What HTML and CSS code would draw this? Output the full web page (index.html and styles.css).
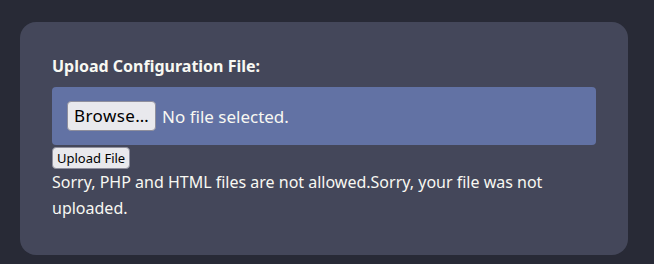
FILE: index.html
```html
<!DOCTYPE html>
<html lang="en">
<head>
<meta charset="utf-8">
<title>Upload</title>
<link rel="stylesheet" href="styles.css">
</head>
<body>
<main class="card">
  <form class="upload-form">
    <label class="label">Upload Configuration File:</label>
    <div class="file-box">
      <span class="browse">Browse…</span>
      <span class="file-status">No file selected.</span>
    </div>
    <button type="button" class="submit">Upload File</button>
  </form>
  <p class="message">Sorry, PHP and HTML files are not allowed.Sorry, your file was not uploaded.</p>
</main>
</body>
</html>
```
FILE: styles.css
```css
html, body {
  margin: 0;
  padding: 0;
  background: #282a36;
  height: 100%;
}
body {
  font-family: "Noto Sans", "Open Sans", sans-serif;
  color: #f8f8f2;
  padding: 22px 0 0 20px;
  box-sizing: border-box;
}
.card {
  width: 608px;
  box-sizing: border-box;
  background: #44475a;
  border-radius: 16px;
  padding: 32px 32px 34px 32px;
}
.upload-form {
  display: flex;
  flex-direction: column;
  align-items: flex-start;
}
.label {
  font-weight: 700;
  font-size: 16px;
  line-height: 24px;
  margin-bottom: 9px;
}
.file-box {
  align-self: stretch;
  background: #6272a4;
  border-radius: 4px;
  padding: 14px 15px;
  display: flex;
  align-items: center;
  gap: 6px;
  font-size: 17px;
}
.browse {
  background: #e9e9ed;
  color: #000;
  border: 1px solid #8f8f9d;
  border-radius: 4px;
  padding: 0 6px 0 6px;
  height: 28px;
  line-height: 28px;
  font-size: 17px;
  letter-spacing: 0.4px;
}
.file-status {
  color: #f8f8f2;
}
.submit {
  margin-top: 2px;
  font-family: "Noto Sans", sans-serif;
  font-size: 13px;
  line-height: 18px;
  color: #000;
  background: #e9e9ed;
  border: 1px solid #8f8f9d;
  border-radius: 4px;
  padding: 1px 4px;
}
.message {
  margin: 0;
  font-size: 16px;
  line-height: 26px;
}
```
